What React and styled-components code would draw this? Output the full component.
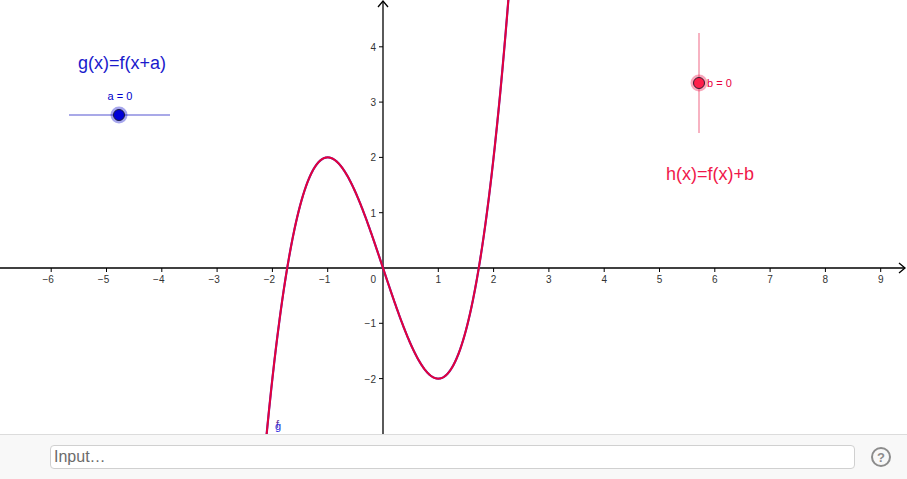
import React from 'react';
import styled, { createGlobalStyle } from 'styled-components';

const GlobalStyle = createGlobalStyle`
  html, body {
    margin: 0;
    padding: 0;
    background: #ffffff;
    font-family: "Liberation Sans", Arial, sans-serif;
    overflow: hidden;
  }
`;

const W = 907;
const H = 434;
const OX = 383;
const OY = 268;
const S = 55.3;

const toPx = (x) => OX + x * S;
const toPy = (y) => OY - y * S;

const f = (x) => x * x * x - 3 * x;

const buildPath = () => {
  const pts = [];
  for (let x = -2.2; x <= 2.32; x += 0.01) {
    pts.push(`${toPx(x).toFixed(2)},${toPy(f(x)).toFixed(2)}`);
  }
  return 'M' + pts.join(' L');
};

const curvePath = buildPath();

const Page = styled.div`
  width: ${W}px;
  height: 479px;
  display: flex;
  flex-direction: column;
`;

const Canvas = styled.div`
  height: ${H}px;
  background: #ffffff;
  overflow: hidden;
`;

const InputBar = styled.div`
  flex: 1;
  display: flex;
  align-items: center;
  gap: 16px;
  padding: 0 16px 0 50px;
  background: #f8f8f8;
  border-top: 1px solid #dcdcdc;
`;

const InputField = styled.div`
  flex: 1;
  height: 22px;
  display: flex;
  align-items: center;
  padding: 0 3px;
  background: #ffffff;
  border: 1px solid #d0d0d0;
  border-radius: 4px;
  color: #6b6b6b;
  font-size: 16px;
`;

const HelpButton = styled.div`
  width: 16px;
  height: 16px;
  border: 2px solid #8c8c8c;
  border-radius: 50%;
  display: flex;
  align-items: center;
  justify-content: center;
  color: #8c8c8c;
  font-size: 13px;
  font-weight: bold;
`;

const xTicks = [-6, -5, -4, -3, -2, -1, 1, 2, 3, 4, 5, 6, 7, 8, 9];
const yTicks = [-2, -1, 1, 2, 3, 4];
const fmt = (n) => (n < 0 ? `\u2212${-n}` : `${n}`);

const Graph = () => (
  <svg width={W} height={H} viewBox={`0 0 ${W} ${H}`}>
    {/* axes */}
    <g stroke="#000" strokeWidth="1.3" fill="none">
      <line x1="0" y1={OY} x2={W - 2} y2={OY} />
      <polyline points={`${W - 8},${OY - 5} ${W - 2},${OY} ${W - 8},${OY + 5}`} />
      <line x1={OX} y1={H} x2={OX} y2="1" />
      <polyline points={`${OX - 5},7 ${OX},1 ${OX + 5},7`} />
    </g>
    <g stroke="#000" strokeWidth="1">
      {xTicks.map((t) => (
        <line key={t} x1={toPx(t)} y1={OY} x2={toPx(t)} y2={OY + 4} />
      ))}
      {yTicks.map((t) => (
        <line key={t} x1={OX - 4} y1={toPy(t)} x2={OX} y2={toPy(t)} />
      ))}
    </g>
    <g fill="#333" fontSize="10" fontFamily="Liberation Sans, Arial, sans-serif">
      {xTicks.map((t) => (
        <text key={t} x={toPx(t) - (t < 0 ? 3 : 0)} y={OY + 15} textAnchor="middle">
          {fmt(t)}
        </text>
      ))}
      {yTicks.map((t) => (
        <text key={t} x={OX - 7} y={toPy(t) + 4} textAnchor="end">
          {fmt(t)}
        </text>
      ))}
      <text x={OX - 7} y={OY + 15} textAnchor="end">0</text>
    </g>

    {/* curves g (blue) and h (red) overlapping */}
    <path d={curvePath} fill="none" stroke="#5a2ab8" strokeWidth="2.2" />
    <path d={curvePath} fill="none" stroke="#e6003a" strokeWidth="1.9" />
    <text x="276" y="428" fontSize="11" fill="#663399" fontFamily="Liberation Sans, Arial, sans-serif">f</text>
    <text x="275" y="430" fontSize="11" fill="#2222dd" fontFamily="Liberation Sans, Arial, sans-serif">g</text>

    {/* slider a */}
    <line x1="69" y1="115" x2="170" y2="115" stroke="#8c8ce0" strokeWidth="1.5" />
    <circle cx="119" cy="115" r="8.5" fill="#0000cc" fillOpacity="0.35" />
    <circle cx="119" cy="115" r="5.5" fill="#0000d8" stroke="#1a1a40" strokeWidth="1" />
    <text x="120" y="100" fontSize="11" fill="#0000cc" textAnchor="middle" fontFamily="Liberation Sans, Arial, sans-serif">a = 0</text>
    <text x="122" y="69" fontSize="18" fill="#1a1acc" textAnchor="middle" fontFamily="Liberation Sans, Arial, sans-serif">g(x)=f(x+a)</text>

    {/* slider b */}
    <line x1="699" y1="33" x2="699" y2="133" stroke="#f59aae" strokeWidth="1.5" />
    <circle cx="699" cy="83" r="8.5" fill="#ee2255" fillOpacity="0.4" />
    <circle cx="699" cy="83" r="5.5" fill="#ff1f4a" stroke="#3a1a30" strokeWidth="1" />
    <text x="707" y="87" fontSize="11" fill="#e8003c" fontFamily="Liberation Sans, Arial, sans-serif">b = 0</text>
    <text x="710" y="180" fontSize="18" fill="#f0184a" textAnchor="middle" fontFamily="Liberation Sans, Arial, sans-serif">h(x)=f(x)+b</text>
  </svg>
);

export default function App() {
  return (
    <>
      <GlobalStyle />
      <Page>
        <Canvas>
          <Graph />
        </Canvas>
        <InputBar>
          <InputField>Input…</InputField>
          <HelpButton>?</HelpButton>
        </InputBar>
      </Page>
    </>
  );
}
